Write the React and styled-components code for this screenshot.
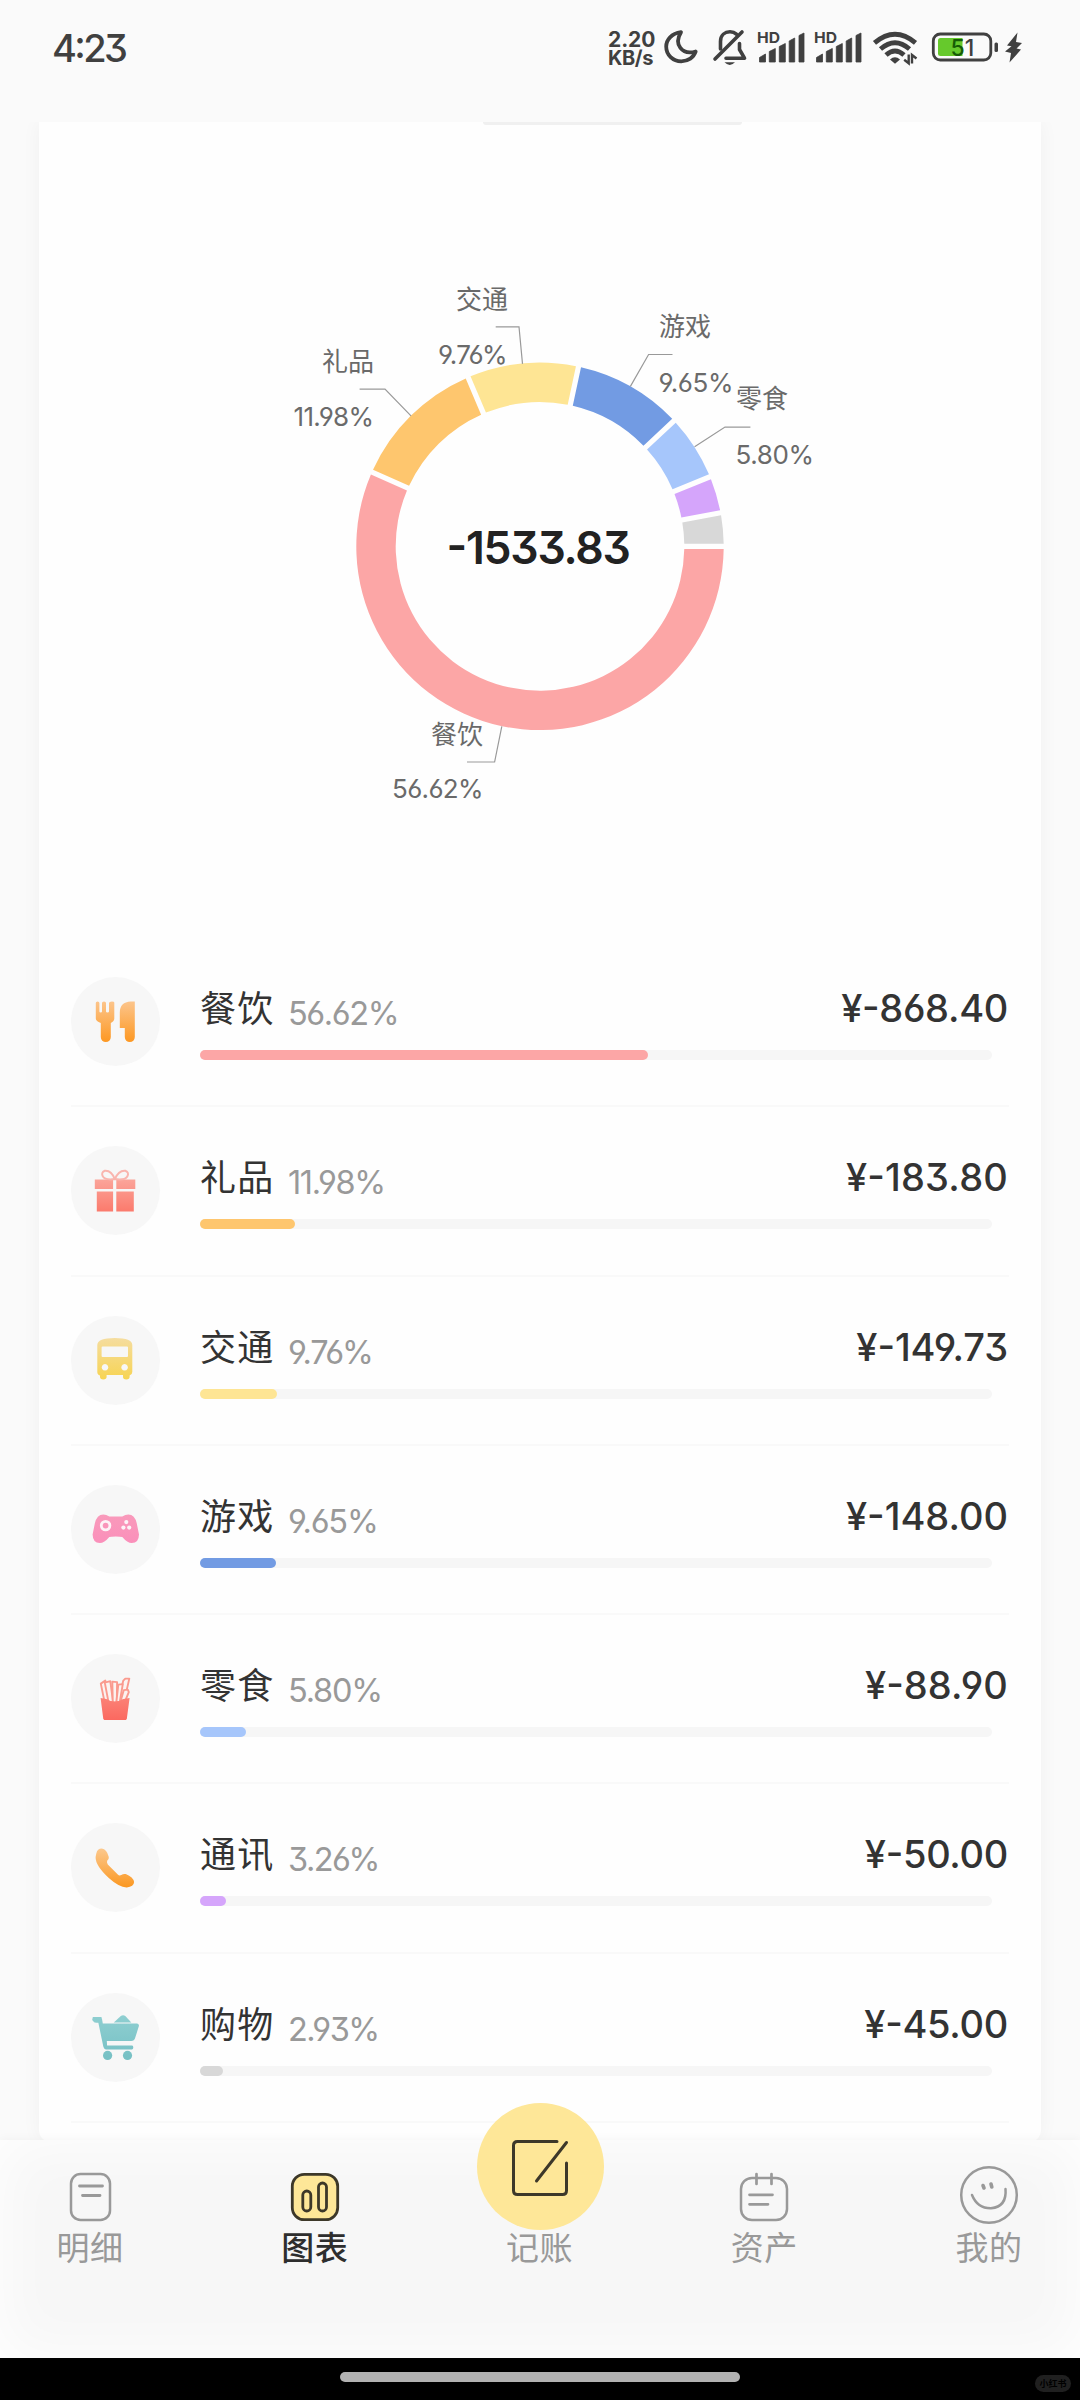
import React from "react";
import styled, { createGlobalStyle } from "styled-components";

const GlobalStyle = createGlobalStyle`
  *, *::before, *::after { box-sizing: border-box; }
  html, body { margin: 0; padding: 0; background: #fafafa; }
  body {
    font-family: Inter, "Noto Sans CJK SC", sans-serif;
    font-feature-settings: "cv03", "cv04", "cv09", "case";
    -webkit-font-smoothing: antialiased;
  }
  svg { display: block; overflow: visible; }
`;

const Screen = styled.div`
  width: 1080px;
  height: 2400px;
  display: flex;
  flex-direction: column;
  overflow: hidden;
  background: #fafafa;
`;

/* ---------- status bar ---------- */

const StatusBar = styled.header`
  flex: none;
  height: 122px;
  padding: 27px 58px 0 52px;
  display: flex;
  justify-content: space-between;
  align-items: flex-start;
  color: #404040;
`;

const Clock = styled.div`
  font-size: 38px;
  line-height: 42px;
  font-weight: 500;
  letter-spacing: -2.6px;
`;

const StatusIcons = styled.div`
  display: flex;
  align-items: flex-start;
  height: 42px;
`;

const NetSpeed = styled.div`
  width: 47px;
  margin: 3px 9px 0 0;
  display: flex;
  flex-direction: column;
  line-height: 19px;
  font-weight: 700;
  white-space: nowrap;
`;

const SpeedLine = styled.span`
  font-size: ${(p) => p.$size}px;
  letter-spacing: ${(p) => p.$tracking}px;
`;

const Glyph = styled.svg`
  flex: none;
  margin-right: ${(p) => p.$gap || 0}px;
`;

/* ---------- scrolled card ---------- */

const Content = styled.main`
  flex: none;
  height: 2018px;
  padding: 0 39px;
  overflow: hidden;
`;

const Card = styled.section`
  height: 2020px;
  display: flex;
  flex-direction: column;
  background: #fefefe;
  border-radius: 0 0 12px 12px;
  box-shadow: 0 0 20px rgba(0, 0, 0, 0.045);
`;

const TabRemnant = styled.div`
  flex: none;
  width: 259px;
  height: 3px;
  margin-left: 444px;
  border-radius: 0 0 6px 6px;
  background: #f0f0f0;
`;

const ChartArea = styled.div`
  flex: none;
  height: 813px;
`;

const List = styled.ul`
  list-style: none;
  margin: 0;
  padding: 0 32px;
  display: flex;
  flex-direction: column;
`;

const Row = styled.li`
  height: 169.3px;
  padding-top: 39px;
  display: flex;
  align-items: flex-start;
  border-bottom: 2px solid #f9f9f9;
`;

const IconDisc = styled.div`
  flex: none;
  width: 89px;
  height: 89px;
  margin-right: 40px;
  border-radius: 50%;
  background: #f7f7f7;
`;

const RowBody = styled.div`
  flex: 1;
  display: flex;
  flex-direction: column;
  gap: 17px;
  padding-top: 3px;
`;

const RowHead = styled.div`
  height: 53px;
  display: flex;
  align-items: baseline;
  line-height: 53px;
  white-space: nowrap;
`;

const Name = styled.span`
  width: 74px;
  margin-right: 14px;
  font-family: "Noto Sans CJK SC", sans-serif;
  font-size: 36px;
  letter-spacing: 1.2px;
  color: #333;
`;

const Percent = styled.span`
  position: relative;
  top: 3px;
  font-size: 32.5px;
  letter-spacing: ${(p) => p.$tracking}px;
  color: #999;
`;

const Amount = styled.span`
  margin-left: auto;
  margin-right: 1px;
  font-size: 38px;
  font-weight: 500;
  letter-spacing: ${(p) => p.$tracking}px;
  color: #333;
`;

const Track = styled.div`
  width: 792px;
  height: 10px;
  border-radius: 5px;
  background: #f6f6f6;
`;

const Fill = styled.div`
  height: 10px;
  border-radius: 5px;
  background: ${(p) => p.$color};
`;

/* ---------- bottom navigation ---------- */

const Nav = styled.nav`
  flex: none;
  position: relative;
  height: 218px;
  padding: 0 31px 0 30px;
  display: flex;
  justify-content: space-between;
  background: #f7f7f7;
  box-shadow: inset 0 0 60px #ffffff, 0 -2px 8px rgba(0, 0, 0, 0.03);
`;

const NavItem = styled.div`
  width: 120px;
  height: 128px;
  display: flex;
  flex-direction: column;
  align-items: center;
  justify-content: flex-end;
`;

const NavIcon = styled.div`
  display: flex;
  align-items: center;
  justify-content: center;
  height: 58px;
  padding-top: ${(p) => p.$drop || 0}px;
  margin-bottom: 2px;
`;

const NavLabel = styled.div`
  flex: none;
  height: 42px;
  line-height: 40px;
  font-family: "Noto Sans CJK SC", sans-serif;
  font-size: 33px;
  letter-spacing: 0.6px;
  font-weight: ${(p) => (p.$active ? 500 : 400)};
  color: ${(p) => (p.$active ? "#2e2e2e" : "#999")};
`;

const AddButton = styled.div`
  flex: none;
  width: 127px;
  height: 127px;
  margin: 0 0 -4px 1px;
  padding-top: 3px;
  border-radius: 50%;
  background: #fee798;
  display: flex;
  align-items: center;
  justify-content: center;
`;

const GestureBar = styled.footer`
  flex: none;
  position: relative;
  height: 42px;
  background: #000;
  display: flex;
  justify-content: center;
  padding-top: 14px;
`;

const Handle = styled.div`
  width: 400px;
  height: 10px;
  border-radius: 5px;
  background: #b2b2b2;
`;

const Watermark = styled.div`
  position: absolute;
  right: 9px;
  top: 17px;
  width: 36px;
  height: 17px;
  border-radius: 9px;
  background: #202020;
  color: #000;
  font-family: "Noto Sans CJK SC", sans-serif;
  font-size: 9px;
  font-weight: 700;
  line-height: 17px;
  text-align: center;
`;

/* ---------- status glyphs ---------- */

const Moon = () => (
  <Glyph width="34" height="36" viewBox="0 0 34 36" $gap={15} fill="none" stroke="currentColor" strokeWidth="3.8" strokeLinejoin="round">
    <path d="M17 5.200C7.500 6.500 2.200 12.800 2.200 19.500 2.200 28 9 34.300 17.300 34.300 24 34.300 29.800 30.500 31.700 24.500 18 28.500 9.500 17.500 17 5.200Z" />
  </Glyph>
);

const BellOff = () => (
  <Glyph width="34" height="40" viewBox="0 0 34 40" $gap={10} fill="none" stroke="currentColor" strokeWidth="3.6" strokeLinecap="round" strokeLinejoin="round">
    <path d="M29 5 2 32" />
    <path d="M7.500 22V14.500C7.500 8 12 4.800 17 4.800c2.800 0 4.800.8 6.400 2.300" />
    <path d="M26.500 16.500v6l5 8.700H13" />
    <path d="M11.500 35.200h10.500q-5.200 5.400-10.500 0Z" fill="currentColor" stroke="none" />
  </Glyph>
);

const HdText = styled.text`
  font-size: 14.5px;
  font-weight: 700;
`;

const Signal = ({ gap }) => (
  <Glyph width="49" height="38" viewBox="0 0 49 38" $gap={gap} fill="currentColor">
    <HdText x="0" y="15.800" textLength="23" lengthAdjust="spacingAndGlyphs">HD</HdText>
    <path d="M2.500 35v-4.500L8.500 27v8ZM12.300 35V24.500l6-3V35ZM22.300 35V19.500l6-3V35ZM32.200 35V14l5.500-3v24ZM42 35V8.500L47 6v29Z" stroke="currentColor" strokeWidth=".8" strokeLinejoin="round" />
  </Glyph>
);

const Wifi = () => (
  <Glyph width="46" height="38" viewBox="0 0 46 38" $gap={13} fill="none" stroke="currentColor" strokeWidth="4.8">
    <path d="M1.500 15.800Q22 -1.500 42.500 15.800" />
    <path d="M7.500 22Q22 9.500 36.500 22" />
    <path d="M13 28Q22 20 31 28" />
    <path d="M17 32.500q5-4.500 10 0L22 36.800Z" fill="currentColor" stroke="none" />
    <path d="M35.700 27.500v8.700l-4.500-3.500M39 36.500v-8.500l4.500 3.500" strokeWidth="2.400" />
  </Glyph>
);

const BatteryText = styled.text`
  font-size: 23px;
  font-weight: 500;
`;

const Battery = () => (
  <Glyph width="66" height="38" viewBox="0 0 66 38" $gap={7} fill="none">
    <rect x="1.300" y="7" width="57.500" height="26" rx="7" stroke="currentColor" strokeWidth="2.800" />
    <path d="M8.500 11H30.500V29H8.500Q6 29 6 26.500V13.500Q6 11 8.500 11Z" fill="#66c92c" />
    <rect x="62.500" y="15.500" width="3.500" height="9.500" rx="1.500" fill="currentColor" />
    <BatteryText x="18.500" y="28.600">
      <tspan fill="#165c05">5</tspan>
      <tspan fill="#404040">1</tspan>
    </BatteryText>
  </Glyph>
);

const Bolt = () => (
  <Glyph width="17" height="38" viewBox="0 0 17 38" fill="currentColor">
    <path d="M12.500 5.500 2 18.500 6.500 19.300 0 24.500 6 26 4.500 35.500 16 22.500 11.500 21.500 17 16 11 15Z" />
  </Glyph>
);

/* ---------- category icons, drawn on an 89 x 89 disc ---------- */

const Shade = ({ id, from, to }) => (
  <linearGradient id={id} x1="0" y1="22" x2="0" y2="67" gradientUnits="userSpaceOnUse">
    <stop offset="0" stopColor={from} />
    <stop offset="1" stopColor={to} />
  </linearGradient>
);

const Disc = ({ id, from, to, children }) => (
  <svg width="89" height="89" viewBox="0.700 0.400 89 89">
    <defs>
      <Shade id={id} from={from} to={to} />
    </defs>
    <g fill={`url(#${id})`}>{children}</g>
  </svg>
);

const Dining = () => (
  <Disc id="dining" from="#fcc893" to="#fd961e">
    <path d="M25.500 26.500q0-1.500 1.800-1.500t1.800 1.500V35q0 1 1.300 1t1.300-1v-8.500q0-1.500 2-1.500t2 1.500V35q0 1 1.500 1t1.500-1v-8.500q0-1.500 2.900-1.500t2.400 1.500V42q0 2.500-3.500 4.500V60.500a5 5 0 0 1-10 0V46.500q-5-2-5-4.500Z" />
    <path d="M49.500 36q0-10.500 11-11H64.500V60.500a5 5 0 0 1-10 0V51.500H49.500Z" />
  </Disc>
);

const Gift = () => (
  <Disc id="gift" from="#fbb4ab" to="#fb796b">
    <path d="M24.500 34H42.800V43.500H24.500ZM46 34H65V43.500H46ZM26.500 45.800H42.800V66H26.500ZM46 45.800H63.500V66H46Z" />
    <path d="M44.500 33.500Q41 24.500 34.500 25.200 30.500 26.800 32.500 30.800T44.500 33.500Q48.500 24.500 55 25.200 59.200 26.800 57 30.800T44.500 33.500" fill="none" stroke="#f9b5ae" strokeWidth="2" />
  </Disc>
);

const Bus = () => (
  <Disc id="bus" from="#f5dda0" to="#f7d34d">
    <path fillRule="evenodd" d="M27 29.500Q27 22.300 44.500 22.300T62 29.500V56.500Q62 59.300 59.300 60V61.500q0 2.300-3.300 2.300t-3.300-2.300V59.500H36.300V61.500q0 2.300-3.300 2.300t-3.300-2.300V60Q27 59.300 27 56.500ZM31.300 32q0-1 1-1H56.700q1 0 1 1V40.300q0 1-1 1H32.300q-1 0-1-1ZM34.700 48.400a3.300 3.300 0 1 0 .01 0ZM54.300 48.400a3.300 3.300 0 1 0 .01 0Z" />
  </Disc>
);

const Gamepad = () => (
  <Disc id="game" from="#f89dbb" to="#fb8cba">
    <path d="M33 30Q36 30 39 32H52Q55 30 58 30 64.500 30 66.500 39L68.700 50Q68.500 58.500 61.500 58.500 57 58.500 52 52.500 50 51.800 45.500 51.800T39 52.500Q34 58.500 29.500 58.500 22.500 58.500 22.300 50L24.500 39Q26.500 30 33 30Z" />
    <circle cx="35.300" cy="41" r="4.300" fill="none" stroke="#fdf3f7" strokeWidth="2.800" />
    <g fill="#fdf3f7">
      <circle cx="56" cy="37.500" r="2.100" />
      <circle cx="53.100" cy="43" r="2.100" />
      <circle cx="58.900" cy="43" r="2.100" />
    </g>
  </Disc>
);

const Fries = () => (
  <Disc id="fries" from="#fb9a8d" to="#fb685f">
    <g fill="#fcf3f1" stroke="#fa9a8e" strokeWidth="1.900" strokeLinejoin="round">
      <path d="M30.500 30 35 27 39.500 48H34.200Z" />
      <path d="M34.500 29 40 27.500 42.800 48.500H38.200Z" />
      <path d="M53 27 55 25 59 25 56.500 36 52.500 47H48Z" />
      <path d="M53.500 36.500 57.500 36 58.500 38.500 55 47H50.500Z" />
      <path d="M42 28 46.800 28.500 46.500 49H42.500Z" />
      <path d="M48 31 52.500 30.500 49.500 48 46 49Z" />
    </g>
    <path d="M30.300 44.500 36 45.500Q44.500 50.500 53 45.500L59.300 44.500 56.500 65.500 55.500 66.500H34L33 65.500Z" />
  </Disc>
);

const Phone = () => (
  <Disc id="phone" from="#fccd98" to="#fb951b">
    <path d="M26 31Q27 26 31.500 26 36.500 26.500 38.500 34.500 38.800 36.500 37 38 36 39.500 37.500 42L47.500 52Q49 53.500 51 52.500 53 51 55.500 51.500 63 54.500 63.800 59.500 63.500 64.500 56.500 64.800 49 65 38.500 55.500 25 43 25.300 34.500Z" />
  </Disc>
);

const Cart = () => (
  <Disc id="cart" from="#8fcfd1" to="#76c0c4">
    <path d="M22.500 24.500H31.200V29.800H29L26.300 29.800Q22 29.500 22 27Z" />
    <path d="M43.500 29.800 50.500 23.500Q52.800 22 55 23.500L61 29.800Z" />
    <path fillRule="evenodd" d="M24 24.500H29.500Q31.300 24.800 31.800 27L32.500 31H66.800Q69 31.500 68.600 33.500L64.800 45.500Q64 48.500 61 48.500H36.500L36.800 52.800H62Q63 53 63 55T61.500 56.800H35.500Q33.500 56.500 33 54L28 29.800H24Z" />
    <circle cx="37.300" cy="62.800" r="4.600" />
    <circle cx="57.200" cy="62.800" r="4.600" />
  </Disc>
);

/* ---------- data ---------- */

const categories = [
  { name: "餐饮", pct: 56.62, amount: "868.40", color: "#fca6a6", Icon: Dining, pt: -1.4, at: -0.3 },
  { name: "礼品", pct: 11.98, amount: "183.80", color: "#fec66e", Icon: Gift, pt: -1.4, at: 0.2 },
  { name: "交通", pct: 9.76, amount: "149.73", color: "#fee594", Icon: Bus, pt: -1.2, at: -0.1 },
  { name: "游戏", pct: 9.65, amount: "148.00", color: "#729be3", Icon: Gamepad, pt: -1.2, at: 0 },
  { name: "零食", pct: 5.8, amount: "88.90", color: "#a6c6fb", Icon: Fries, pt: -1.2, at: 0.1 },
  { name: "通讯", pct: 3.26, amount: "50.00", color: "#d5a5fb", Icon: Phone, pt: -1.5, at: -0.3 },
  { name: "购物", pct: 2.93, amount: "45.00", color: "#d8d8d8", Icon: Cart, pt: -1.6, at: -0.3 },
];

/* ---------- donut chart; origin is the centre of the ring ---------- */

const callouts = [
  { name: "交通", pct: "9.76%", x: -32, y: -237, px: -32.5, py: -182.5, w: 69.5, end: true, line: "-44.300,-219.600 -21,-219.600 -17.500,-182.500" },
  { name: "礼品", pct: "11.98%", x: -166, y: -175.500, px: -166, py: -120, w: 80.5, end: true, line: "-180.400,-157.200 -155,-157.200 -129,-130.500" },
  { name: "游戏", pct: "9.65%", x: 119, y: -210.500, px: 118.500, py: -154.500, w: 75, line: "132.500,-191.900 108.600,-191.900 90.400,-160" },
  { name: "零食", pct: "5.80%", x: 196, y: -138, px: 195.500, py: -82, w: 78.500, line: "210.400,-119.300 185,-119.300 154.600,-99.700" },
  { name: "餐饮", pct: "56.62%", x: -57, y: 197.500, px: -56.5, py: 252, w: 91.500, end: true, line: "-73,215.600 -45.400,215.600 -38.200,180" },
];

const Leader = styled.polyline`
  fill: none;
  stroke: #999;
  stroke-width: 1.2;
`;

const CalloutText = styled.text`
  font-size: 26px;
  fill: #6a6a6a;
`;

const Total = styled.text`
  font-size: 44.5px;
  font-weight: 600;
  fill: #222;
`;

const R_OUT = 183.7;
const R_IN = 144.3;
const HALF_GAP = 2.6;

function slicePath(a0, a1) {
  const point = (r, a) => `${(r * Math.cos(a)).toFixed(2)} ${(r * Math.sin(a)).toFixed(2)}`;
  const o = HALF_GAP / R_OUT;
  const i = HALF_GAP / R_IN;
  const large = a1 - a0 > Math.PI ? 1 : 0;
  return (
    `M${point(R_OUT, a0 + o)}A${R_OUT} ${R_OUT} 0 ${large} 1 ${point(R_OUT, a1 - o)}` +
    `L${point(R_IN, a1 - i)}A${R_IN} ${R_IN} 0 ${large} 0 ${point(R_IN, a0 + i)}Z`
  );
}

function Donut() {
  const total = categories.reduce((s, c) => s + c.pct, 0);
  let angle = 0;
  return (
    <svg width="1002" height="811" viewBox="-501 -421.400 1002 811">
      {categories.map((c) => {
        const start = angle;
        angle += (c.pct / total) * Math.PI * 2;
        return <path key={c.name} d={slicePath(start, angle)} fill={c.color} />;
      })}
      {callouts.map((c) => (
        <g key={c.name} textAnchor={c.end ? "end" : "start"}>
          <Leader points={c.line} />
          <CalloutText x={c.x} y={c.y}>{c.name}</CalloutText>
          <CalloutText x={c.px} y={c.py} textLength={c.w}>{c.pct}</CalloutText>
        </g>
      ))}
      <Total x="-93.500" y="17.800" textLength="184.500">-1533.83</Total>
    </svg>
  );
}

/* ---------- navigation icons ---------- */

const line = { fill: "none", stroke: "#999", strokeWidth: 2.5, strokeLinecap: "round" };

const DetailIcon = () => (
  <svg width="41" height="48" viewBox="0 0 41 48" {...line}>
    <rect x="1" y="1" width="39" height="46" rx="9.500" />
    <path d="M9.500 13H32.500M12.500 22.500H30" strokeWidth="2.800" />
  </svg>
);

const ChartIcon = () => (
  <svg width="48" height="48" viewBox="0 0 48 48" {...line} stroke="#3d3829" strokeWidth="2.800">
    <rect x="1.300" y="1.300" width="45.400" height="45.400" rx="12" fill="#fee798" />
    <rect x="11.800" y="18" width="8" height="20" rx="4" />
    <rect x="27.500" y="10" width="8" height="28" rx="4" />
  </svg>
);

const EditIcon = () => (
  <svg width="56" height="56" viewBox="0 0 56 56" {...line} stroke="#3d3829" strokeWidth="3">
    <path d="M45 1.500H5.500Q1.500 1.500 1.500 5.500V50.500Q1.500 54.500 5.500 54.500H50.500Q54.500 54.500 54.500 50.500V23M54.500 2.500 24.500 41" />
  </svg>
);

const AssetIcon = () => (
  <svg width="48" height="48" viewBox="0 0 48 48" {...line}>
    <rect x="1" y="5" width="46" height="42" rx="11" />
    <path d="M16.500 1V11M31.500 1V11M9.500 21.800H32.500M9.500 31.300H28" strokeWidth="2.700" />
  </svg>
);

const SmileIcon = () => (
  <svg width="58" height="58" viewBox="0 0 58 58" {...line}>
    <circle cx="29" cy="29" r="27.800" />
    <path d="M12 29Q17.500 42.500 31 42.300 47 40.500 45.500 23" />
    <path d="M23 19.500 24 22M31 18 31.800 21" strokeWidth="3.600" />
  </svg>
);

export default function App() {
  return (
    <>
      <GlobalStyle />
      <Screen>
        <StatusBar>
          <Clock>4:23</Clock>
          <StatusIcons>
            <NetSpeed>
              <SpeedLine $size={21} $tracking={-0.1}>2.20</SpeedLine>
              <SpeedLine $size={20} $tracking={-0.4}>KB/s</SpeedLine>
            </NetSpeed>
            <Moon />
            <BellOff />
            <Signal gap={8} />
            <Signal gap={10} />
            <Wifi />
            <Battery />
            <Bolt />
          </StatusIcons>
        </StatusBar>

        <Content>
          <Card>
            <TabRemnant />
            <ChartArea>
              <Donut />
            </ChartArea>
            <List>
              {categories.map(({ name, pct, amount, color, Icon, pt, at }) => (
                <Row key={name}>
                  <IconDisc>
                    <Icon />
                  </IconDisc>
                  <RowBody>
                    <RowHead>
                      <Name>{name}</Name>
                      <Percent $tracking={pt}>{pct.toFixed(2)}%</Percent>
                      <Amount $tracking={at}>¥-{amount}</Amount>
                    </RowHead>
                    <Track>
                      <Fill $color={color} style={{ width: `${pct}%` }} />
                    </Track>
                  </RowBody>
                </Row>
              ))}
            </List>
          </Card>
        </Content>

        <Nav>
          <NavItem>
            <NavIcon $drop={3}><DetailIcon /></NavIcon>
            <NavLabel>明细</NavLabel>
          </NavItem>
          <NavItem>
            <NavIcon $drop={3}><ChartIcon /></NavIcon>
            <NavLabel $active>图表</NavLabel>
          </NavItem>
          <NavItem>
            <AddButton><EditIcon /></AddButton>
            <NavLabel>记账</NavLabel>
          </NavItem>
          <NavItem>
            <NavIcon $drop={3}><AssetIcon /></NavIcon>
            <NavLabel>资产</NavLabel>
          </NavItem>
          <NavItem>
            <NavIcon><SmileIcon /></NavIcon>
            <NavLabel>我的</NavLabel>
          </NavItem>
        </Nav>

        <GestureBar>
          <Handle />
          <Watermark>小红书</Watermark>
        </GestureBar>
      </Screen>
    </>
  );
}
